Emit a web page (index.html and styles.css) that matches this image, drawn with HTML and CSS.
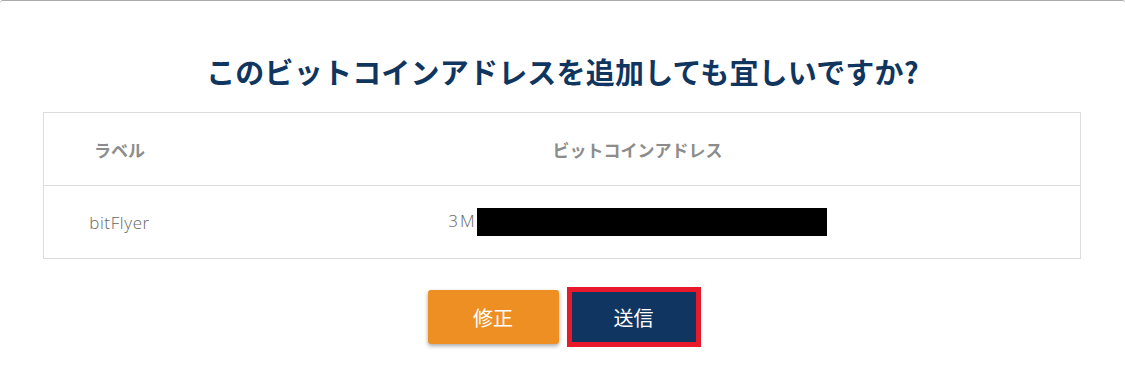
FILE: index.html
```html
<!DOCTYPE html>
<html lang="ja">
<head>
<meta charset="utf-8">
<title>確認</title>
<link rel="stylesheet" href="styles.css">
</head>
<body>
<div class="modal">
  <h1 class="title">このビットコインアドレスを追加しても宜しいですか?</h1>
  <div class="addr-table">
    <div class="row head">
      <div class="cell">ラベル</div>
      <div class="cell">ビットコインアドレス</div>
    </div>
    <div class="row data">
      <div class="cell">bitFlyer</div>
      <div class="cell"><span class="addr">3M</span><span class="redact"></span></div>
    </div>
  </div>
  <div class="actions">
    <button class="btn btn-edit">修正</button>
    <button class="btn btn-send">送信</button>
  </div>
</div>
</body>
</html>
```

FILE: styles.css
```css
html, body {
  margin: 0;
  padding: 0;
  background: #ffffff;
}

body {
  font-family: "Noto Sans CJK JP", "Noto Sans", sans-serif;
  width: 1125px;
  height: 385px;
  overflow: hidden;
}

.modal {
  border-top: 1px solid #ababab;
  border-radius: 3px 3px 0 0;
  padding-top: 49px;
  height: 335px;
}

.title {
  margin: 0;
  text-align: center;
  font-size: 29px;
  line-height: 42px;
  font-weight: 700;
  color: #10365f;
  letter-spacing: 0.2px;
}

.addr-table {
  margin: 20px 44px 0 43px;
  border: 1px solid #dcdcdc;
}

.row {
  display: grid;
  grid-template-columns: 151px 1fr;
  height: 72px;
  align-items: center;
}

.row + .row {
  border-top: 1px solid #dcdcdc;
}

.cell {
  text-align: center;
}

.head .cell {
  font-size: 17px;
  font-weight: 700;
  color: #8c8c8c;
  padding-top: 1px;
}

.data .cell {
  font-family: "Open Sans", "Noto Sans CJK JP", sans-serif;
  font-size: 17px;
  font-weight: 300;
  color: #666666;
  letter-spacing: 0.6px;
}

.addr {
  letter-spacing: 2px;
}

.redact {
  display: inline-block;
  width: 350px;
  height: 28px;
  background: #000000;
  vertical-align: middle;
  margin-left: 0;
}

.actions {
  display: flex;
  justify-content: center;
  align-items: center;
  gap: 8px;
  margin-top: 28px;
  padding-left: 3px;
}

.btn {
  font-family: "Noto Sans CJK JP", sans-serif;
  font-size: 20px;
  color: #ffffff;
  border: none;
  padding: 0;
  cursor: pointer;
  box-sizing: border-box;
}

.btn-edit {
  width: 131px;
  height: 54px;
  background: #ed8f23;
  border-radius: 3px;
  box-shadow: 0 2px 4px rgba(0, 0, 0, 0.35);
}

.btn-send {
  width: 134px;
  height: 60px;
  background: #0f3560;
  border: 5px solid #e8192b;
}
```
